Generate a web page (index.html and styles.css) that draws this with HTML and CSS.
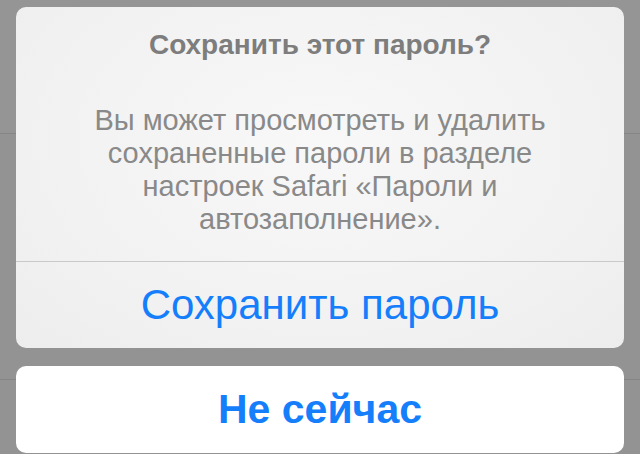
FILE: index.html
```html
<!DOCTYPE html>
<html lang="ru">
<head>
<meta charset="UTF-8" />
<meta name="viewport" content="width=device-width, initial-scale=1.0"/>
<title>Сохранить пароль</title>
<link rel="stylesheet" href="styles.css">
</head>
<body>
<!-- dimmed page underneath the sheet -->
<div class="backdrop">
    <div class="backdrop-row first"></div>
    <div class="backdrop-row second"></div>
</div>

<div class="sheet">
    <div class="alert">
        <div class="alert-body">
            <h2 class="alert-title">Сохранить этот пароль?</h2>
            <p class="alert-message">Вы может просмотреть и удалить сохраненные пароли в разделе настроек Safari «Пароли и автозаполнение».</p>
        </div>
        <button class="alert-action">Сохранить пароль</button>
    </div>
    <button class="cancel">Не сейчас</button>
</div>
</body>
</html>
```

FILE: styles.css
```css
body, html {
    margin: 0;
    padding: 0;
    width: 100%;
    height: 100%;
    overflow: hidden;
    font-family: "Liberation Sans", Arial, sans-serif;
    background: #939393;
    position: relative;
}

.backdrop-row {
    border-bottom: 1px solid #858585;
}

.backdrop-row.first {
    height: 133px;
    background: #959595;
}

.backdrop-row.second {
    height: 245px;
}

/* Action sheet sits over the page */
.sheet {
    position: absolute;
    top: 7px;
    left: 16px;
    right: 16px;
    display: flex;
    flex-direction: column;
    gap: 18px;
}

.alert {
    border-radius: 10px;
    overflow: hidden;
    background: radial-gradient(ellipse at 50% 40%, #f8f8f8 0%, #f1f1f1 70%, #ededed 100%);
    display: flex;
    flex-direction: column;
}

.alert-body {
    height: 254px;
    box-sizing: border-box;
    padding: 22px 60px 0;
    text-align: center;
}

.alert-title {
    margin: 0;
    font-size: 28px;
    font-weight: bold;
    color: #7d7d7d;
    line-height: 32px;
}

.alert-message {
    margin: 43px 0 0;
    font-size: 29px;
    line-height: 33px;
    color: #898989;
}

.alert-action, .cancel {
    border: none;
    background: none;
    font-family: inherit;
    color: #157efb;
    cursor: pointer;
    padding: 0;
}

.alert-action {
    height: 87px;
    border-top: 1px solid #c9c9c9;
    font-size: 42px;
}

.cancel {
    height: 87px;
    border-radius: 10px;
    background: #fff;
    font-size: 41px;
    font-weight: bold;
}
```
